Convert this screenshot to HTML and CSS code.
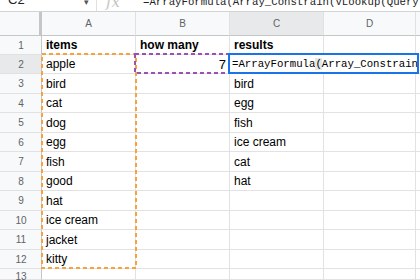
FILE: index.html
```html
<!DOCTYPE html>
<html>
<head>
<meta charset="utf-8">
<link rel="stylesheet" href="styles.css">
</head>
<body>
<div class="fbar">
  <div class="namebox"><span class="ref">C2</span><span class="caret">▾</span></div>
  <div class="fx">fx</div>
  <div class="ftext">=ArrayFormula(Array_Constrain(VLookup(Query(A2:A12</div>
</div>
<div class="sheet">
  <div class="corner"></div>
  <div class="colh">A</div>
  <div class="colh">B</div>
  <div class="colh sel">C</div>
  <div class="colh">D</div>
  <div class="colh end"></div>

  <div class="rowh">1</div><div class="c b">items</div><div class="c b">how many</div><div class="c b">results</div><div class="c"></div><div class="c end"></div>
  <div class="rowh sel">2</div><div class="c">apple</div><div class="c num">7</div><div class="c"></div><div class="c"></div><div class="c end"></div>
  <div class="rowh">3</div><div class="c">bird</div><div class="c"></div><div class="c">bird</div><div class="c"></div><div class="c end"></div>
  <div class="rowh">4</div><div class="c">cat</div><div class="c"></div><div class="c">egg</div><div class="c"></div><div class="c end"></div>
  <div class="rowh">5</div><div class="c">dog</div><div class="c"></div><div class="c">fish</div><div class="c"></div><div class="c end"></div>
  <div class="rowh">6</div><div class="c">egg</div><div class="c"></div><div class="c">ice cream</div><div class="c"></div><div class="c end"></div>
  <div class="rowh">7</div><div class="c">fish</div><div class="c"></div><div class="c">cat</div><div class="c"></div><div class="c end"></div>
  <div class="rowh">8</div><div class="c">good</div><div class="c"></div><div class="c">hat</div><div class="c"></div><div class="c end"></div>
  <div class="rowh">9</div><div class="c">hat</div><div class="c"></div><div class="c"></div><div class="c"></div><div class="c end"></div>
  <div class="rowh">10</div><div class="c">ice cream</div><div class="c"></div><div class="c"></div><div class="c"></div><div class="c end"></div>
  <div class="rowh">11</div><div class="c">jacket</div><div class="c"></div><div class="c"></div><div class="c"></div><div class="c end"></div>
  <div class="rowh">12</div><div class="c">kitty</div><div class="c"></div><div class="c"></div><div class="c"></div><div class="c end"></div>
  <div class="rowh last">13</div><div class="c"></div><div class="c"></div><div class="c"></div><div class="c"></div><div class="c end"></div>

  <svg class="range orange" viewBox="0 0 96 216" preserveAspectRatio="none"><rect x="1" y="1" width="94" height="214" fill="none" stroke="#f4a340" stroke-width="2" stroke-dasharray="4 3"/></svg>
  <svg class="range purple" viewBox="0 0 97 21" preserveAspectRatio="none"><rect x="1" y="1" width="95" height="19" fill="none" stroke="#9b51b4" stroke-width="2" stroke-dasharray="4 3"/></svg>
  <div class="editor">=ArrayFormula<span class="paren">(</span>Array_Constrain(VLookup(Query</div>
</div>
</body>
</html>
```

FILE: styles.css
```css
* { box-sizing: border-box; }
html, body { margin: 0; padding: 0; background: #fff; overflow: hidden; }
body { width: 420px; height: 280px; font-family: "Liberation Sans", Arial, sans-serif; }

.fbar {
  height: 12px;
  border-bottom: 1px solid #d3d3d3;
  display: flex;
  overflow: hidden;
  align-items: flex-end;
}
.namebox {
  width: 97px;
  flex: none;
  display: flex;
  justify-content: space-between;
  align-items: flex-end;
  padding: 0 7px 0 8px;
  border-right: 1px solid #e0e0e0;
  height: 100%;
  font-size: 13px;
  color: #222;
}
.namebox .ref { line-height: 13px; margin-bottom: 5px; }
.namebox .caret { font-size: 9px; color: #555; line-height: 9px; margin-bottom: 4px; }
.fx {
  width: 46px;
  flex: none;
  padding-left: 9px;
  font-family: "DejaVu Serif", serif;
  font-style: italic;
  font-size: 15px;
  color: #c4c4c4;
  line-height: 15px;
  margin-bottom: 1px;
}
.ftext {
  flex: none;
  font-family: "Liberation Mono", monospace;
  font-size: 10.7px;
  line-height: 13px;
  color: #222;
  white-space: nowrap;
  margin-bottom: 2px;
}

.sheet {
  position: relative;
  display: grid;
  grid-template-columns: 42px 94px 94px 94px 92px 10px;
  grid-template-rows: 24px 19px 19px 20px 19px 20px 19px 20px 19px 20px 19px 20px 19px 11px;
}
.corner {
  background: #f8f9fa;
  border-right: 3px solid #c4c7c5;
  border-bottom: 1px solid #c4c7c5;
}
.colh {
  background: #f8f9fa;
  border-right: 1px solid #e1e1e1;
  border-bottom: 1px solid #c4c7c5;
  font-size: 10px;
  color: #5f6368;
  display: flex;
  align-items: center;
  justify-content: center;
}
.colh.sel { background: #e7e9eb; }
.rowh {
  background: #f8f9fa;
  border-right: 1px solid #c4c7c5;
  border-bottom: 1px solid #e1e1e1;
  font-size: 10px;
  color: #5f6368;
  display: flex;
  align-items: center;
  justify-content: center;
  padding-left: 1px;
}
.rowh.last { align-items: flex-start; padding-top: 2px; }
.rowh.sel { background: #e7e9eb; }
.c {
  border-right: 1px solid #e2e2e2;
  border-bottom: 1px solid #e2e2e2;
  font-size: 12px;
  color: #000;
  line-height: 15px;
  padding: 0 3px 1px 4px;
  display: flex;
  align-items: flex-end;
  white-space: nowrap;
  overflow: hidden;
}
.c.b { font-weight: bold; }
.c.num { justify-content: flex-end; font-size: 13px; }
.end { border-right: none; }

.range { position: absolute; display: block; }
.orange { left: 41px; top: 41px; width: 96px; height: 216px; }
.purple { left: 134px; top: 41px; width: 97px; height: 21px; }
.editor {
  position: absolute;
  left: 228px; top: 41px; width: 191px; height: 21px;
  border: 2px solid #1a73e8;
  background: #fff;
  font-family: "Liberation Mono", monospace;
  font-size: 10.7px;
  line-height: 13px;
  color: #000;
  padding: 3px 0 0 2px;
  white-space: nowrap;
  overflow: hidden;
}
.paren { background: #e6e6e6; }
```
